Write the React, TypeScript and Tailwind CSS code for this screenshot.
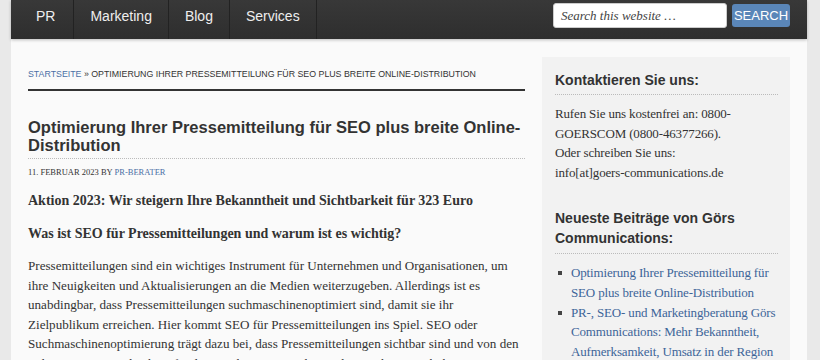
import React from 'react'

const navItems = ['PR', 'Marketing', 'Blog', 'Services']

const recentPosts = [
  'Optimierung Ihrer Pressemitteilung für SEO plus breite Online-Distribution',
  'PR-, SEO- und Marketingberatung Görs Communications: Mehr Bekanntheit, Aufmerksamkeit, Umsatz in der Region',
]

const sans = "font-['Liberation_Sans',Arial,sans-serif]"
const serif = "font-['Liberation_Serif',Georgia,serif]"

export default function App() {
  return (
    <div className="min-h-[360px] w-[820px] bg-[#e9e9e9] overflow-hidden">
      <div className="ml-[11px] w-[796px] bg-[#fafafa] min-h-[360px]">
        {/* Navigation */}
        <nav className={`relative flex h-[39px] bg-gradient-to-b from-[#383838] to-[#2e2e2e] shadow-[0_1px_3px_rgba(0,0,0,0.25)] ${sans}`}>
          {navItems.map((item, i) => (
            <a
              key={item}
              className={`h-full flex items-center pb-[6px] text-[14px] text-[#eee] border-r border-[#222] ${
                i === 0 ? 'pl-[25px] pr-[18px]' : 'px-[16px]'
              }`}
            >
              {item}
            </a>
          ))}
          <div className="ml-auto mr-[17px] flex items-center gap-[5px] h-[31px]">
            <div
              className={`w-[174px] h-[25px] bg-white rounded-[3px] border border-[#ccc] flex items-center px-[7px] text-[13px] italic text-[#444] ${serif}`}
            >
              Search this website …
            </div>
            <button className="w-[58px] h-[23px] rounded-[3px] bg-[#5a86b8] text-white text-[13px] flex items-center justify-center">
              SEARCH
            </button>
          </div>
        </nav>

        <div className="flex gap-[17px] px-[17px] pt-[18px]">
          {/* Main column */}
          <main className="w-[497px] pt-[11px]">
            <div className={`text-[8.8px] leading-[12px] uppercase text-[#333] pb-[9px] border-b-2 border-[#333] ${sans}`}>
              <span className="text-[#4a6fa5]">Startseite</span> » Optimierung Ihrer Pressemitteilung für SEO plus breite Online-Distribution
            </div>

            <h1 className={`mt-[27px] text-[16.5px] leading-[18px] font-bold text-[#333] pb-[4px] border-b border-dotted border-[#bbb] ${sans}`}>
              Optimierung Ihrer Pressemitteilung für SEO plus breite Online-Distribution
            </h1>

            <div className={`mt-[7px] text-[8.5px] leading-[12px] uppercase text-[#333] ${serif}`}>
              11. Februar 2023 by <span className="text-[#4a6fa5]">PR-Berater</span>
            </div>

            <div className={`text-[#333] ${serif}`}>
              <h3 className="mt-[13px] text-[14px] font-bold leading-[20px]">
                Aktion 2023: Wir steigern Ihre Bekanntheit und Sichtbarkeit für 323 Euro
              </h3>
              <h3 className="mt-[13px] text-[14px] font-bold leading-[20px]">
                Was ist SEO für Pressemitteilungen und warum ist es wichtig?
              </h3>
              <p className="mt-[12px] text-[13.1px] leading-[19.5px]">
                Pressemitteilungen sind ein wichtiges Instrument für Unternehmen und Organisationen, um ihre Neuigkeiten und Aktualisierungen an die Medien weiterzugeben. Allerdings ist es unabdingbar, dass Pressemitteilungen suchmaschinenoptimiert sind, damit sie ihr Zielpublikum erreichen. Hier kommt SEO für Pressemitteilungen ins Spiel. SEO oder Suchmaschinenoptimierung trägt dazu bei, dass Pressemitteilungen sichtbar sind und von den richtigen Personen leicht gefunden werden, was wiederum die Reichweite erhöht.
              </p>
            </div>
          </main>

          {/* Sidebar */}
          <aside className="w-[248px] bg-[#f2f2f2] pl-[13px] pr-[12px] pt-[14px] pb-4">
            <h4 className={`text-[14px] leading-[18px] font-bold text-[#333] pb-[5px] border-b border-dotted border-[#bbb] ${sans}`}>
              Kontaktieren Sie uns:
            </h4>
            <p className={`mt-[9px] text-[13px] tracking-[-0.15px] leading-[19.6px] text-[#333] ${serif}`}>
              Rufen Sie uns kostenfrei an: 0800-GOERSCOM (0800-46377266).
              <br />
              Oder schreiben Sie uns:
              <br />
              info[at]goers-communications.de
            </p>

            <h4 className={`mt-[26px] text-[14px] leading-[20px] font-bold text-[#333] pb-[5px] border-b border-dotted border-[#bbb] ${sans}`}>
              Neueste Beiträge von Görs Communications:
            </h4>
            <ul className={`mt-[9px] text-[13px] tracking-[-0.15px] leading-[19.6px] text-[#3d6599] ${serif}`}>
              {recentPosts.map((post) => (
                <li key={post} className="flex">
                  <span className="w-[4px] h-[4px] bg-[#444] mt-[8px] ml-[3px] mr-[9px] shrink-0" />
                  <span>{post}</span>
                </li>
              ))}
            </ul>
          </aside>
        </div>
      </div>
    </div>
  )
}
